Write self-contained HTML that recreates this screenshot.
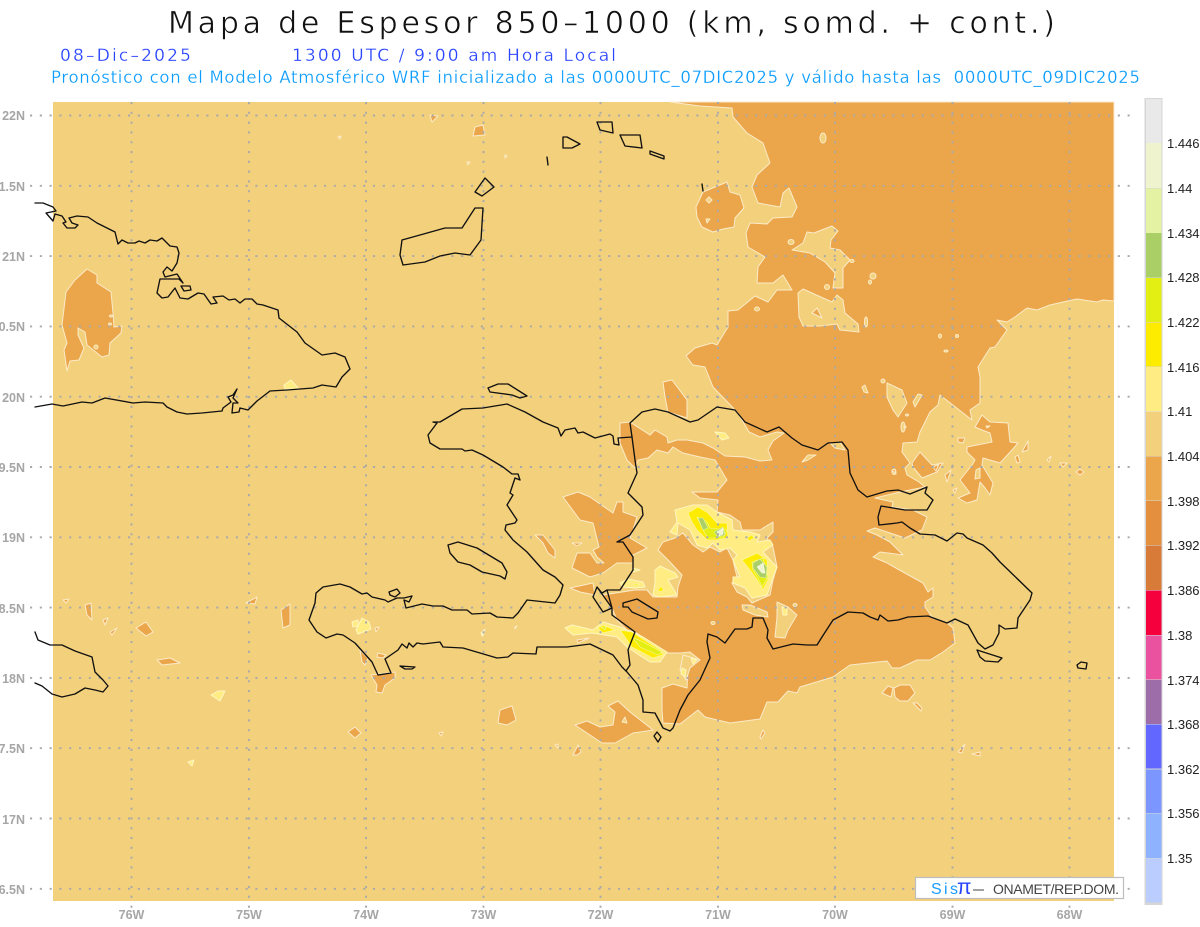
<!DOCTYPE html>
<html lang="es"><head><meta charset="utf-8"><title>Mapa de Espesor 850-1000</title>
<style>
html,body{margin:0;padding:0;background:#fff;width:1200px;height:927px;overflow:hidden}
svg{display:block}
text{font-family:"Liberation Sans",sans-serif}
.hd{font-family:"DejaVu Sans","Liberation Sans",sans-serif;white-space:pre}
.o{fill:#EBA64B;stroke:#FBEBC8;stroke-width:1;stroke-linejoin:round}
.t{fill:#F3D07C;stroke:#FBEBC8;stroke-width:1;stroke-linejoin:round}
.p{fill:#FFEC82;stroke:#FFF6C0;stroke-width:1;stroke-linejoin:round}
.y{fill:#FDEC00;stroke:#FFF6A0;stroke-width:.7;stroke-linejoin:round}
.g{fill:#E3EE12;stroke:#F4F7A0;stroke-width:.6;stroke-linejoin:round}
.v{fill:#A9CF66;stroke:#E4F3A3;stroke-width:.6;stroke-linejoin:round}
.w{fill:#EFF4CE;stroke:#fff;stroke-width:.5}
.c{fill:none;stroke:#111;stroke-width:1.35;stroke-linejoin:round;stroke-linecap:round}
.gr{fill:none;stroke:#A9A9A9;stroke-width:1.9;stroke-dasharray:2.1 7.7}
.yl{fill:#A6A6A6;font-size:12.5px;font-weight:700;text-anchor:end}
.xl{fill:#A6A6A6;font-size:12.5px;font-weight:700;text-anchor:middle}
.cl{fill:#222;font-size:13px}
</style></head><body>
<svg width="1200" height="927" viewBox="0 0 1200 927" xmlns="http://www.w3.org/2000/svg">
<rect width="1200" height="927" fill="#fff"/>

<text class="hd" x="168" y="33" font-size="30" fill="#111" stroke="#fff" stroke-width=".6" textLength="887" lengthAdjust="spacing">Mapa de Espesor 850–1000 (km, somd. + cont.)</text>
<text class="hd" x="60" y="61" font-size="17" fill="#2A45FF" stroke="#fff" stroke-width=".25" textLength="131" lengthAdjust="spacing">08–Dic–2025</text>
<text class="hd" x="292" y="61" font-size="17" fill="#2A45FF" stroke="#fff" stroke-width=".25" textLength="324" lengthAdjust="spacing">1300 UTC / 9:00 am Hora Local</text>
<text class="hd" x="51" y="83" font-size="16.5" fill="#0A9CFF" stroke="#fff" stroke-width=".25" textLength="1089" lengthAdjust="spacing">Pronóstico con el Modelo Atmosférico WRF inicializado a las 0000UTC_07DIC2025 y válido hasta las  0000UTC_09DIC2025</text>

<rect x="53" y="102" width="1061" height="799" fill="#F3D07C"/>

<!-- main orange -->
<path class="o" d="M670,102 L700,106 L732,108 L733,117 L747,133 L763,143 L770,163 L757,175 L752,187 L758,203 L780,207 L783,193 L789,188 L797,207 L792,217 L773,218 L767,224 L750,223 L746,233 L748,247 L765,257 L758,267 L757,283 L773,283 L783,275 L792,290 L777,290 L768,302 L755,296 L738,310 L728,311 L728,327 L717,345 L712,343 L695,348 L686,356 L693,365 L705,367 L713,387 L738,413 L749,432 L760,437 L777,432 L784,433 L773,441 L768,450 L772,460 L760,461 L745,457 L725,456 L713,448 L703,443 L687,440 L677,440 L668,443 L667,437 L655,430 L650,435 L630,422 L620,423 L620,443 L627,460 L635,468 L638,460 L648,458 L657,450 L668,453 L673,447 L683,453 L700,457 L715,460 L727,480 L717,492 L692,492 L700,498 L718,500 L717,512 L730,515 L740,522 L742,530 L760,530 L773,522 L773,532 L767,538 L773,547 L777,567 L773,580 L770,595 L752,603 L747,597 L737,592 L732,583 L737,577 L733,560 L727,548 L720,552 L710,547 L703,552 L693,545 L683,533 L675,538 L663,542 L658,550 L670,562 L682,575 L678,587 L677,597 L660,597 L653,597 L647,590 L635,590 L622,592 L603,595 L612,608 L617,620 L627,630 L635,632 L667,653 L680,653 L690,652 L700,660 L688,667 L687,688 L673,684 L662,688 L662,710 L663,723 L680,724 L698,710 L705,717 L730,723 L760,719 L767,702 L778,702 L788,691 L797,693 L800,687 L833,677 L850,665 L887,661 L892,668 L900,668 L917,660 L930,660 L943,652 L955,643 L953,628 L947,623 L932,617 L925,607 L925,602 L933,597 L933,588 L928,592 L923,583 L903,572 L887,563 L873,557 L880,552 L903,555 L890,542 L877,535 L867,531 L875,528 L905,538 L922,530 L927,517 L913,510 L892,507 L893,502 L875,498 L900,492 L925,487 L919,482 L907,475 L905,468 L910,463 L902,452 L903,443 L917,442 L920,432 L930,412 L938,405 L940,395 L972,420 L970,410 L980,403 L980,377 L978,367 L990,348 L995,347 L1007,330 L997,320 L1007,322 L1015,317 L1027,308 L1037,310 L1050,305 L1063,302 L1077,299 L1097,302 L1103,300 L1114,301 L1114,102 Z"/>

<!-- light islands inside orange -->
<path class="t" d="M792,250 L803,243 L807,232 L814,233 L832,226 L838,231 L831,240 L830,248 L840,250 L850,260 L843,268 L843,288 L833,288 L835,273 L825,262 L810,253 Z"/>
<path class="t" d="M798,293 L803,289 L832,302 L837,295 L843,300 L845,313 L858,324 L859,332 L840,330 L837,324 L820,326 L803,326 L799,317 Z"/>
<path class="o" d="M812,313 L817,308 L822,318 Z"/>
<path class="t" d="M887,383 L902,390 L907,403 L898,417 L893,410 L887,397 Z"/>
<path class="t" d="M862,387 L865,385 L868,393 L864,392 Z"/>
<path class="t" d="M913,402 L918,394 L922,395 L915,407 Z"/>
<path class="t" d="M802,462 L808,455 L816,455 L808,460 Z"/>
<path class="t" d="M830,443 L840,442 L845,450 L835,448 Z"/>
<path class="t" d="M742,605 L750,605 L767,612 L768,617 L755,615 L743,610 Z"/>
<path class="t" d="M777,602 L788,607 L797,615 L788,630 L785,638 L775,637 L777,617 Z"/>
<path class="t" d="M683,655 L700,660 L690,668 L686,680 L680,670 Z"/>
<g class="t">
<ellipse cx="823" cy="138" rx="3" ry="5"/><ellipse cx="791" cy="242" rx="3" ry="2.5"/><ellipse cx="827" cy="287" rx="2.5" ry="2.5"/>
<ellipse cx="873" cy="276" rx="3" ry="3"/><ellipse cx="870" cy="282" rx="1.5" ry="2"/><ellipse cx="757" cy="309" rx="2.5" ry="2"/>
<ellipse cx="866" cy="322" rx="1.5" ry="5"/><ellipse cx="852" cy="261" rx="2" ry="1.5"/><ellipse cx="940" cy="336" rx="1.5" ry="2"/>
<ellipse cx="957" cy="336" rx="1.5" ry="1.5"/><ellipse cx="946" cy="351" rx="2" ry="1"/><ellipse cx="883" cy="381" rx="2" ry="2"/>
<ellipse cx="903" cy="427" rx="2" ry="5"/><ellipse cx="907" cy="415" rx="1.5" ry="1"/><ellipse cx="894" cy="472" rx="2" ry="2.5"/>
<ellipse cx="905" cy="427" rx="1" ry="1"/><ellipse cx="713" cy="623" rx="2" ry="1.5"/><ellipse cx="795" cy="605" rx="2" ry="1.5"/>
</g>

<!-- orange islands on light -->
<path class="o" d="M696,207 L703,192 L727,182 L730,192 L740,195 L744,208 L735,218 L734,227 L723,229 L713,232 L702,227 L697,217 Z"/>
<path class="t" d="M709,197 L712,200 L709,203 L706,200 Z M706,219 L710,219 L707,223 Z"/>
<path class="o" d="M87,269 L97,275 L97,283 L111,292 L113,313 L114,327 L122,326 L121,333 L110,343 L109,355 L102,357 L87,345 L85,332 L78,328 L78,335 L84,348 L79,360 L70,361 L67,371 L64,350 L67,343 L62,325 L66,292 L75,280 Z"/>
<g class="t"><ellipse cx="111" cy="316" rx="1.5" ry="1"/><ellipse cx="110" cy="324" rx="1.5" ry="1"/><ellipse cx="96" cy="347" rx="2" ry="2"/></g>
<path class="o" d="M563,497 L578,492 L590,497 L613,513 L617,502 L623,502 L623,512 L637,517 L633,530 L630,538 L647,548 L633,555 L633,563 L617,563 L603,573 L590,577 L572,568 L577,553 L590,553 L597,563 L604,563 L597,557 L593,550 L599,547 L593,523 L580,520 Z"/>
<path class="o" d="M535,535 L543,535 L555,550 L555,558 L548,553 L543,543 Z"/>
<path class="o" d="M572,543 L582,543 L577,546 Z"/>
<path class="o" d="M570,588 L593,583 L595,595 L580,592 Z"/>
<path class="o" d="M663,382 L672,380 L687,400 L687,418 L668,412 L665,397 Z"/>
<path class="o" d="M575,725 L587,721 L600,727 L613,725 L615,712 L608,706 L618,701 L630,712 L653,730 L633,733 L615,743 L602,743 L587,733 Z"/>
<path class="t" d="M622,722 L625,717 L627,723 Z"/>
<path class="o" d="M498,723 L500,710 L512,706 L516,720 L507,725 Z"/>
<path class="o" d="M348,732 L355,727 L361,733 L355,738 Z"/>
<path class="o" d="M573,755 L578,745 L581,752 L577,755 Z"/>
<path class="o" d="M371,675 L395,672 L395,678 L385,685 L382,693 L376,692 L377,685 Z"/>
<path class="o" d="M360,650 L368,658 L365,665 L362,662 Z"/>
<path class="o" d="M378,653 L386,655 L383,658 L377,657 Z"/>
<path class="o" d="M375,628 L379,627 L376,632 Z"/>
<path class="o" d="M577,640 L589,638 L578,643 Z"/>
<path class="o" d="M439,733 L443,732 L441,736 Z M555,745 L558,744 L558,748 Z"/>
<path class="o" d="M475,127 L483,125 L485,135 L473,136 Z"/>
<path class="o" d="M430,115 L438,116 L432,122 Z"/>
<path class="o" d="M85,605 L91,603 L92,620 L87,615 Z M103,620 L108,618 L105,625 Z M110,632 L117,628 L112,635 Z M136,628 L146,622 L153,632 L146,636 Z M157,660 L170,658 L180,663 L162,665 Z M281,610 L290,604 L290,625 L283,628 Z M246,603 L257,597 L255,604 Z M63,600 L69,599 L66,603 Z"/>
<path class="o" d="M894,688 L900,685 L910,685 L915,693 L908,701 L900,701 L895,697 Z"/>
<path class="o" d="M882,693 L888,686 L893,688 L891,697 Z"/>
<path class="o" d="M913,703 L917,703 L922,708 L921,711 Z"/>
<path class="o" d="M760,737 L763,730 L765,733 L761,739 Z"/>
<path class="o" d="M958,752 L965,744 L962,753 Z M972,754 L980,752 L980,756 Z"/>
<path class="o" d="M975,427 L982,415 L990,422 L1008,423 L1010,442 L1018,443 L1012,450 L1000,463 L983,458 L982,465 L993,483 L990,495 L985,488 L980,482 L977,500 L967,503 L958,498 L970,493 L960,480 L972,465 L975,460 L967,452 L967,447 L977,445 L992,442 L990,433 L982,430 Z"/>
<path class="t" d="M976,470 L980,468 L980,478 L975,479 Z M986,426 L990,426 L987,428 Z"/>
<path class="o" d="M912,463 L920,452 L932,465 L943,463 L937,472 L922,478 L913,467 Z"/>
<path class="o" d="M958,438 L965,438 L963,443 L958,442 Z"/>
<path class="o" d="M1022,452 L1028,441 L1028,450 Z M1015,457 L1018,455 L1020,462 L1017,463 Z M1047,460 L1051,456 L1049,462 Z M1060,463 L1067,463 L1063,467 Z M1076,472 L1080,469 L1084,472 L1080,475 Z M892,470 L895,469 L896,474 Z M945,475 L951,470 L947,482 Z M953,490 L957,488 L955,493 Z M933,467 L939,464 L936,471 Z"/>

<!-- pale yellow / yellow core -->
<path class="p" d="M675,510 L693,505 L707,505 L717,512 L732,520 L733,530 L750,532 L760,535 L757,542 L770,540 L773,545 L763,552 L772,562 L777,567 L772,580 L767,595 L752,598 L745,588 L733,583 L733,577 L740,577 L733,560 L737,555 L730,548 L720,550 L713,543 L707,548 L697,545 L690,530 L678,523 L677,535 L670,532 L677,522 Z"/>
<path class="y" d="M688,513 L698,507 L708,513 L717,523 L727,523 L728,538 L717,540 L707,540 L697,530 L692,522 Z"/>
<path class="g" d="M697,517 L707,522 L710,528 L727,530 L723,538 L708,538 L703,530 Z"/>
<path class="v" d="M698,518 L703,518 L708,528 L703,530 Z M714,532 L723,527 L725,535 L718,537 Z"/>
<path class="w" d="M717,532 L723,528 L723,534 L719,536 Z"/>
<path class="y" d="M747,538 L752,535 L754,538 L749,541 Z M764,546 L767,546 L766,549 Z"/>
<path class="y" d="M742,560 L757,553 L767,560 L768,580 L763,590 L757,580 L750,570 Z"/>
<path class="g" d="M752,562 L763,558 L768,577 L762,587 L758,578 L753,570 Z"/>
<path class="v" d="M753,563 L760,559 L767,567 L766,578 L760,577 L753,568 Z"/>
<path class="w" d="M757,567 L763,563 L765,573 L762,573 Z"/>
<path class="p" d="M655,570 L660,566 L675,573 L678,577 L668,580 L677,595 L660,597 L653,595 L655,583 Z"/>
<path class="y" d="M658,590 L661,586 L664,590 L659,592 Z"/>
<path class="p" d="M620,583 L628,579 L643,582 L645,587 L635,588 L623,587 Z"/>
<path class="y" d="M633,584 L640,584 L636,586 Z"/>
<path class="p" d="M633,568 L640,570 L633,572 Z"/>
<path class="p" d="M565,628 L572,625 L593,630 L603,622 L620,627 L643,637 L667,652 L660,662 L650,662 L627,647 L617,637 L592,633 L573,635 Z"/>
<path class="y" d="M598,628 L603,625 L615,630 L603,633 Z"/>
<path class="y" d="M620,630 L632,632 L660,650 L663,655 L653,658 L632,647 Z"/>
<path class="g" d="M632,637 L643,642 L662,652 L658,655 L640,647 Z"/>
<path class="g" d="M601,627 L606,627 L605,630 Z"/>
<path class="p" d="M782,607 L787,608 L787,615 L783,615 Z M682,668 L686,670 L685,677 L681,674 Z M691,658 L697,660 L693,664 Z M715,432 L725,433 L729,438 L722,440 Z"/>
<path class="p" d="M284,385 L291,380 L299,389 L285,389 Z M352,622 L358,620 L358,626 L353,627 Z M362,618 L369,622 L371,629 L358,634 L356,630 Z M211,695 L218,691 L225,691 L220,701 Z M188,762 L194,760 L192,766 Z M481,633 L484,630 L482,636 Z"/>
<path class="t" d="M483,632 L485,629 L483,636 Z M515,627 L517,626 L515,629 Z M338,137 L341,136 L340,139 Z M467,162 L470,162 L468,165 Z M505,155 L507,156 L505,158 Z"/>

<!-- grid -->
<g class="gr">
<path d="M131.5,102V908M249,102V908M366,102V908M483.5,102V908M600.5,102V908M718,102V908M835,102V908M952.5,102V908M1069.5,102V908"/>
<path d="M30,115.5H1134M30,185.8H1134M30,256.1H1134M30,326.4H1134M30,396.7H1134M30,467H1134M30,537.3H1134M30,607.6H1134M30,677.9H1134M30,748.2H1134M30,818.5H1134M30,888.8H1134"/>
</g>

<!-- coastlines -->
<g class="c">
<path d="M35,203 L43,203 L53,207 L56,211 L46,213 L53,221 L55,214 L62,216 L66,222 L63,223 L67,228 L75,228 L78,225 L72,223 L69,218 L77,216 L88,217 L97,223 L115,232 L118,244 L122,240 L128,243 L135,243 L139,241 L145,243 L150,240 L157,241 L162,238 L170,246 L177,247 L179,253 L177,263 L172,271 L167,267 L163,272 L165,277 L177,274 L183,283 L179,279 L160,279 L157,293 L162,298 L168,297 L175,288 L180,298 L188,299 L198,293 L204,294 L211,304 L217,303 L213,297 L223,296 L229,300 L235,299 L240,303 L245,299 L252,299 L257,304 L263,305 L278,310 L279,318 L297,332 L305,343 L322,355 L335,353 L345,357 L350,369 L342,377 L336,387 L322,385 L313,388 L287,390 L270,391 L257,401 L248,410 L240,408 L239,412 L232,413 L233,403 L238,403 L233,398 L237,389 L233,395 L228,397 L231,402 L223,408 L222,411 L202,413 L187,414 L177,412 L167,407 L163,403 L145,402 L133,403 L105,398 L92,403 L82,402 L63,406 L52,404 L35,407"/>
<path d="M181,286 L190,286 L191,290 L184,291 Z"/>
<path d="M402,240 L420,235 L445,228 L462,228 L475,208 L483,208 L481,240 L470,255 L455,253 L440,256 L425,262 L403,265 L400,255 Z"/>
<path d="M475,192 L485,178 L494,187 L482,196 Z"/>
<path d="M563,137 L567,137 L580,144 L572,148 L563,148 Z"/>
<path d="M597,122 L612,122 L613,133 L600,130 Z"/>
<path d="M620,135 L640,135 L642,148 L625,146 Z"/>
<path d="M650,151 L664,156 L664,159 L650,154 Z"/>
<path d="M547,157 L548,165"/><path d="M702,184 L703,191"/>
<path d="M433,422 L440,422 L462,409 L483,408 L507,404 L525,412 L543,422 L558,428 L561,436 L565,430 L575,428 L578,433 L583,432 L595,438 L610,434 L613,436 L614,444 L619,445 L618,438 L632,437 L630,423 L642,412 L655,409 L668,412 L690,422 L698,420 L717,407 L735,410 L745,422 L767,432 L779,427 L792,438 L802,445 L818,450 L828,443 L842,442 L848,450 L850,473 L858,490 L867,497 L887,491 L898,490 L910,494 L927,487 L925,493 L933,500 L927,510 L915,510 L905,510 L881,506 L878,517 L879,525 L897,523 L902,522 L910,528 L920,534 L935,535 L947,541 L957,533 L963,534 L967,538 L983,545 L992,553 L1000,562 L1032,593 L1030,600 L1018,618 L1017,628 L1005,629 L999,625 L999,633 L993,645 L985,649 L978,643 L968,625 L955,619 L947,623 L928,616 L908,617 L898,620 L888,621 L880,615 L878,620 L870,617 L863,613 L848,612 L833,620 L822,637 L817,645 L807,645 L793,644 L773,649 L767,638 L768,630 L763,618 L753,618 L752,627 L747,629 L735,629 L725,643 L717,637 L708,634 L707,642 L710,658 L700,680 L688,695 L680,710 L673,728 L670,731 L663,728 L655,713 L643,712 L643,700 L638,685 L627,672 L622,667 L613,655 L590,644 L567,647 L537,647 L536,654 L513,653 L508,657 L497,658 L463,648 L443,647 L440,642 L423,644 L417,643 L413,647 L409,643 L407,648 L402,644 L398,650 L385,659 L391,673 L378,675 L372,662 L355,643 L343,635 L337,634 L326,638 L317,632 L309,620 L315,603 L316,593 L323,587 L340,584 L350,587 L362,594 L367,593 L372,597 L385,600 L388,602 L397,598 L404,598 L412,596 L409,602 L404,600 L406,608 L422,604 L433,606 L443,606 L452,610 L467,610 L472,614 L490,613 L497,617 L513,618 L518,613 L527,600 L555,603 L560,595 L563,585 L555,577 L543,570 L527,552 L513,540 L505,530 L506,525 L515,523 L517,520 L507,505 L513,495 L510,493 L515,478 L520,480 L518,474 L512,474 L503,467 L483,455 L472,450 L465,451 L462,449 L440,449 L430,443 L428,435 L437,423 Z"/>
<path d="M632,437 L635,460 L637,473 L628,493 L642,507 L643,515 L630,535 L617,542 L623,542 L633,557 L633,570 L620,590 L607,590 L602,593 L597,587 L593,597 L603,612 L612,608 L597,587 M607,590 L612,608 L612,615 L635,632 L628,650 L630,665 L626,671"/>
<path d="M623,603 L637,599 L658,612 L657,618 L648,619 L632,612 L628,607 L623,607 Z"/>
<path d="M448,545 L458,542 L477,548 L502,563 L507,572 L505,579 L500,576 L482,572 L470,565 L458,562 L450,553 Z"/>
<path d="M488,388 L498,384 L508,384 L527,396 L520,398 L512,395 L490,392 Z"/>
<path d="M389,592 L397,589 L400,593 L395,597 L390,595 Z"/>
<path d="M400,666 L415,667 L412,669 L405,669 Z"/>
<path d="M657,732 L661,737 L658,742 L654,736 Z"/>
<path d="M977,650 L1002,658 L998,662 L985,661 L980,657 Z"/>
<path d="M1077,665 L1081,662 L1087,663 L1086,669 L1078,668 Z"/>
<path d="M35,632 L38,640 L50,645 L62,645 L75,651 L92,657 L95,672 L103,680 L108,686 L103,692 L95,690 L85,688 L75,694 L62,697 L52,694 L42,686 L35,683"/>
</g>

<!-- axis labels -->
<g class="yl">
<text x="25" y="120">22N</text><text x="25" y="191">1.5N</text><text x="25" y="261">21N</text>
<text x="25" y="331">0.5N</text><text x="25" y="402">20N</text><text x="25" y="472">9.5N</text>
<text x="25" y="542">19N</text><text x="25" y="613">8.5N</text><text x="25" y="683">18N</text>
<text x="25" y="753">7.5N</text><text x="25" y="824">17N</text><text x="25" y="894">6.5N</text>
</g>
<g class="xl">
<text x="131.5" y="919">76W</text><text x="249" y="919">75W</text><text x="366" y="919">74W</text>
<text x="483.5" y="919">73W</text><text x="600.5" y="919">72W</text><text x="718" y="919">71W</text>
<text x="835" y="919">70W</text><text x="952.5" y="919">69W</text><text x="1069.5" y="919">68W</text>
</g>

<!-- logo box -->
<rect x="915.5" y="877.5" width="208" height="21" fill="#fff" stroke="#bdbdbd" stroke-width="1.2"/>
<text x="931" y="894" font-size="16" fill="#1A9BFF" textLength="27" lengthAdjust="spacing">Sis</text>
<text x="957" y="894" font-size="21" fill="#2A45FF">π</text>
<text x="973" y="894" font-size="15" fill="#444" textLength="11" lengthAdjust="spacingAndGlyphs">–</text>
<text x="993" y="894" font-size="14" fill="#444" textLength="126" lengthAdjust="spacing">ONAMET/REP.DOM.</text>

<!-- colour bar -->
<rect x="1144.5" y="98" width="18" height="807" fill="#D6D6D6"/>
<g>
<rect x="1146" y="99" width="15.5" height="44" fill="#E9E9E9"/>
<rect x="1146" y="143" width="15.5" height="45" fill="#EFF4CE"/>
<rect x="1146" y="188.5" width="15.5" height="44.5" fill="#E4F3A3"/>
<rect x="1146" y="233" width="15.5" height="44.5" fill="#A9CF66"/>
<rect x="1146" y="278" width="15.5" height="44" fill="#E3EE12"/>
<rect x="1146" y="322.5" width="15.5" height="44" fill="#FDEC00"/>
<rect x="1146" y="367" width="15.5" height="44.5" fill="#FFEC82"/>
<rect x="1146" y="412" width="15.5" height="44" fill="#F3D07C"/>
<rect x="1146" y="456.5" width="15.5" height="44" fill="#EBA64B"/>
<rect x="1146" y="501" width="15.5" height="44" fill="#E48F3E"/>
<rect x="1146" y="545.5" width="15.5" height="44.5" fill="#D97B38"/>
<rect x="1146" y="590.5" width="15.5" height="44.5" fill="#F5003C"/>
<rect x="1146" y="635.5" width="15.5" height="44" fill="#EA529F"/>
<rect x="1146" y="680" width="15.5" height="44" fill="#9C6DA8"/>
<rect x="1146" y="724.5" width="15.5" height="44" fill="#6268FF"/>
<rect x="1146" y="769.5" width="15.5" height="43.5" fill="#7C96FF"/>
<rect x="1146" y="813.5" width="15.5" height="44.5" fill="#8FB2FF"/>
<rect x="1146" y="858.5" width="15.5" height="44" fill="#BBCCFF"/>
</g>
<g class="cl">
<text x="1167" y="148">1.446</text><text x="1167" y="193">1.44</text><text x="1167" y="238">1.434</text>
<text x="1167" y="282">1.428</text><text x="1167" y="327">1.422</text><text x="1167" y="372">1.416</text>
<text x="1167" y="416">1.41</text><text x="1167" y="461">1.404</text><text x="1167" y="506">1.398</text>
<text x="1167" y="550">1.392</text><text x="1167" y="595">1.386</text><text x="1167" y="640">1.38</text>
<text x="1167" y="685">1.374</text><text x="1167" y="729">1.368</text><text x="1167" y="774">1.362</text>
<text x="1167" y="818">1.356</text><text x="1167" y="863">1.35</text>
</g>
</svg>
</body></html>
